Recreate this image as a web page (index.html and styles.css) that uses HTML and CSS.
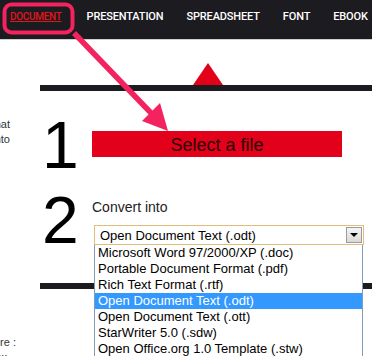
FILE: index.html
```html
<!DOCTYPE html>
<html lang="en">
<head>
    <meta charset="UTF-8">
    <meta name="viewport" content="width=device-width, initial-scale=1.0">
    <title>Online Document Converter</title>
    <link rel="stylesheet" href="styles.css">
</head>
<body>

    <header class="topnav">
        <a class="nav-link active" href="#">DOCUMENT</a>
        <a class="nav-link" href="#">PRESENTATION</a>
        <a class="nav-link" href="#">SPREADSHEET</a>
        <a class="nav-link" href="#">FONT</a>
        <a class="nav-link" href="#">EBOOK</a>
    </header>

    <div class="page">
        <aside class="sidebar">
            <div class="side-block">
                <span class="side-line">document of any format</span>
                <span class="side-line">and convert it into</span>
            </div>
            <div class="side-block side-note">
                <span class="side-line side-wide">Please note here :</span>
                <span class="side-line side-short">for ex</span>
            </div>
        </aside>

        <main class="converter">
            <div class="divider">
                <span class="pointer"></span>
                <span class="rule"></span>
            </div>

            <section class="step step-upload">
                <div class="step-num">1</div>
                <button class="upload-btn">Select a file</button>
            </section>

            <section class="step step-convert">
                <div class="step-num">2</div>
                <div class="step-body">
                    <label class="convert-label">Convert into</label>
                    <div class="select-wrap">
                        <div class="select-box">
                            <span>Open Document Text (.odt)</span>
                            <span class="select-btn"><span class="caret"></span></span>
                        </div>
                        <ul class="select-list">
                            <li>Microsoft Word 97/2000/XP (.doc)</li>
                            <li>Portable Document Format (.pdf)</li>
                            <li>Rich Text Format (.rtf)</li>
                            <li class="selected">Open Document Text (.odt)</li>
                            <li>Open Document Text (.ott)</li>
                            <li>StarWriter 5.0 (.sdw)</li>
                            <li>Open Office.org 1.0 Template (.stw)</li>
                        </ul>
                    </div>
                </div>
            </section>

            <div class="divider divider-end">
                <span class="rule"></span>
            </div>
        </main>
    </div>

    <!-- callout drawn over the page -->
    <svg class="callout" width="372" height="356" viewBox="0 0 372 356">
        <rect x="4.5" y="4.5" width="68" height="28" rx="7" fill="none" stroke="#f2235e" stroke-width="4"/>
        <line x1="74" y1="33" x2="152" y2="114" stroke="#f2235e" stroke-width="5.5"/>
        <polygon points="168,131 142,121 160,103" fill="#f2235e"/>
    </svg>

</body>
</html>
```

FILE: styles.css
```css
body {
    margin: 0;
    font-family: "Liberation Sans", Arial, sans-serif;
    background: #fff;
    color: #000;
    overflow: hidden;
}

.topnav {
    height: 40px;
    background: #1c1b20;
    border-bottom: 1px solid #cfcfcf;
    display: flex;
    gap: 23px;
    padding-left: 10px;
    box-sizing: border-box;
}

.nav-link {
    font-family: Roboto, "Liberation Sans", sans-serif;
    font-size: 11px;
    font-weight: 500;
    letter-spacing: -0.15px;
    color: #fff;
    text-decoration: none;
    line-height: 12px;
    padding-top: 11px;
    white-space: nowrap;
}

.nav-link.active {
    font-size: 10px;
    letter-spacing: -0.3px;
    margin-right: 2px;
    color: #e3141c;
    text-decoration: underline;
}

.page {
    display: flex;
}

.sidebar {
    width: 40px;
    flex-shrink: 0;
    overflow: hidden;
    font-size: 11px;
    line-height: 15px;
    color: #333;
}

.side-block {
    width: 150px;
    margin-left: -140px;
    text-align: right;
    margin-top: 77px;
}

.side-line {
    display: block;
    white-space: nowrap;
}

.side-note {
    margin-top: 188px;
}

.side-wide {
    margin-right: -6px;
}

.side-short {
    margin-right: 3px;
}

.converter {
    flex: 1;
}

.divider {
    margin-top: 23px;
}

.pointer {
    display: block;
    width: 0;
    height: 0;
    margin-left: 153px;
    border-left: 15px solid transparent;
    border-right: 15px solid transparent;
    border-bottom: 22px solid #e2001a;
}

.rule {
    display: block;
    height: 6px;
    background: #1c1b20;
}

.step {
    display: flex;
    align-items: flex-start;
}

.step-num {
    width: 52px;
    flex-shrink: 0;
    font-size: 66px;
    line-height: 66px;
    padding-left: 2px;
    box-sizing: border-box;
}

.step-upload .step-num {
    margin-top: 21px;
}

.upload-btn {
    margin-top: 40px;
    width: 250px;
    height: 26px;
    border: none;
    background: #e2001a;
    color: #2a0003;
    font-family: "Liberation Sans", Arial, sans-serif;
    font-size: 18px;
    padding: 2px 0 0;
}

.step-convert .step-num {
    margin-top: 9px;
}

.convert-label {
    display: block;
    margin-top: 21px;
    font-size: 14px;
    line-height: 16px;
    color: #222;
}

.select-wrap {
    position: relative;
    margin: 10px 0 0 2px;
    width: 270px;
}

.select-box {
    height: 20px;
    border: 1px solid #e0bd78;
    box-sizing: border-box;
    display: flex;
    align-items: center;
    justify-content: space-between;
    padding: 0 1px 0 5px;
    font-size: 13px;
    background: #fff;
}

.select-btn {
    width: 16px;
    height: 16px;
    background: linear-gradient(#f4f4f4, #d9d9d9);
    border: 1px solid #9c9c9c;
    box-sizing: border-box;
    display: flex;
    align-items: center;
    justify-content: center;
}

.caret {
    width: 0;
    height: 0;
    border-left: 4px solid transparent;
    border-right: 4px solid transparent;
    border-top: 4px solid #000;
}

.select-list {
    position: absolute;
    top: 20px;
    left: 0;
    width: 269px;
    margin: 0;
    padding: 0;
    list-style: none;
    background: #fff;
    border: 1px solid #7f9db9;
    border-top: none;
    box-sizing: border-box;
    z-index: 2;
}

.select-list li {
    height: 16px;
    line-height: 16px;
    font-size: 13px;
    padding-left: 3px;
    white-space: nowrap;
}

.select-list li.selected {
    background: #3399ff;
    color: #fff;
}

.divider-end {
    margin-top: 30px;
}

.callout {
    position: absolute;
    top: 0;
    left: 0;
    pointer-events: none;
    z-index: 5;
}
```
